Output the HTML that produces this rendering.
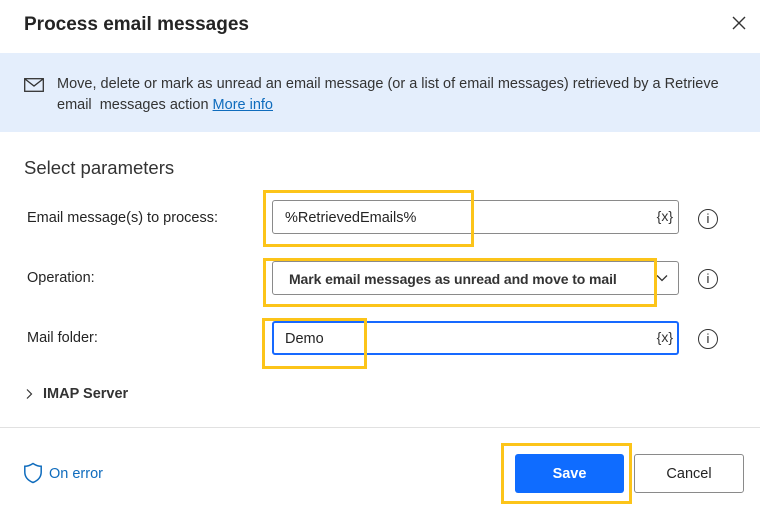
<!DOCTYPE html>
<html><head><style>
*{margin:0;padding:0;box-sizing:border-box}
body{width:760px;height:505px;background:#fff;font-family:"Liberation Sans",sans-serif;color:#242424;position:relative;overflow:hidden}
.a{position:absolute}
.lbl{font-size:14.5px;color:#242424}
.inp{position:absolute;left:272px;width:407px;height:34px;border:1px solid #8a8a8a;border-radius:3px;background:#fff}
.yb{position:absolute;border:3px solid #fcc419}
.info{position:absolute;left:698px;width:20px;height:20px;border:1.5px solid #333;border-radius:50%;font-size:13px;text-align:center;line-height:17px;font-family:"Liberation Sans",sans-serif}
.vx{position:absolute;right:5px;top:7px;font-size:14px;color:#333}
</style></head><body>
<div class="a" style="left:24px;top:14px;font-size:19px;font-weight:bold;color:#242424">Process email messages</div>
<svg class="a" style="left:732px;top:16px" width="14" height="14" viewBox="0 0 14 14"><path d="M1 1L13 13M13 1L1 13" stroke="#333" stroke-width="1.4"/></svg>
<div class="a" style="left:0;top:53px;width:760px;height:79px;background:#e4eefc"></div>
<svg class="a" style="left:24px;top:78px" width="20" height="14" viewBox="0 0 20 14"><rect x="0.7" y="0.7" width="18.6" height="12.6" fill="none" stroke="#333" stroke-width="1.3"/><path d="M1 1L10 8L19 1" fill="none" stroke="#333" stroke-width="1.3"/></svg>
<div class="a" style="left:57px;top:74px;font-size:14.5px;line-height:21px;color:#333;width:700px">Move, delete or mark as unread an email message (or a list of email messages) retrieved by a Retrieve email&nbsp; messages action <span style="color:#0f6cbd;text-decoration:underline">More info</span></div>
<div class="a" style="left:24px;top:157px;font-size:18.5px;color:#333">Select parameters</div>
<div class="a lbl" style="left:27px;top:210px">Email message(s) to process:</div>
<div class="a lbl" style="left:27px;top:270px">Operation:</div>
<div class="a lbl" style="left:27px;top:330px">Mail folder:</div>
<div class="inp" style="top:200px"><div class="a" style="left:12px;top:9px;font-size:14.5px">%RetrievedEmails%</div><div class="vx">{x}</div></div>
<div class="inp" style="top:261px"><div class="a" style="left:16px;top:9px;font-size:14px;font-weight:bold;color:#333;letter-spacing:-0.1px">Mark email messages as unread and move to mail</div>
<svg class="a" style="left:383px;top:12px" width="12" height="8" viewBox="0 0 12 8"><path d="M1 1.5L6 6.5L11 1.5" fill="none" stroke="#333" stroke-width="1.3"/></svg></div>
<div class="inp" style="top:321px;border:2px solid #1769ff"><div class="a" style="left:11px;top:8px;font-size:14.5px">Demo</div><div class="vx" style="top:6px;right:4px">{x}</div></div>
<div class="info" style="top:209px">i</div>
<div class="info" style="top:269px">i</div>
<div class="info" style="top:329px">i</div>
<div class="yb" style="left:263px;top:190px;width:211px;height:57px"></div>
<div class="yb" style="left:263px;top:258px;width:394px;height:49px"></div>
<div class="yb" style="left:262px;top:318px;width:105px;height:51px"></div>
<svg class="a" style="left:25px;top:388px" width="8" height="12" viewBox="0 0 8 12"><path d="M2 1.5L6.5 6L2 10.5" fill="none" stroke="#333" stroke-width="1.2"/></svg>
<div class="a" style="left:43px;top:386px;font-size:14.5px;font-weight:bold;color:#333">IMAP Server</div>
<div class="a" style="left:0;top:427px;width:760px;height:1px;background:#e1e1e1"></div>
<svg class="a" style="left:23px;top:462px" width="20" height="22" viewBox="0 0 20 22"><path d="M10 1.5C7 3.5 4.5 4.3 1.8 4.3V10C1.8 15 5 18.5 10 20.5C15 18.5 18.2 15 18.2 10V4.3C15.5 4.3 13 3.5 10 1.5Z" fill="none" stroke="#0f6cbd" stroke-width="1.5"/></svg>
<div class="a" style="left:49px;top:466px;font-size:14.5px;color:#0f6cbd">On error</div>
<div class="a" style="left:515px;top:454px;width:109px;height:39px;background:#0f6cff;border-radius:3px;color:#fff;font-weight:bold;font-size:14.5px;text-align:center;line-height:40px">Save</div>
<div class="yb" style="left:501px;top:443px;width:131px;height:61px"></div>
<div class="a" style="left:634px;top:454px;width:110px;height:39px;border:1px solid #8a8a8a;border-radius:3px;font-size:14.5px;text-align:center;line-height:38px">Cancel</div>
</body></html>
